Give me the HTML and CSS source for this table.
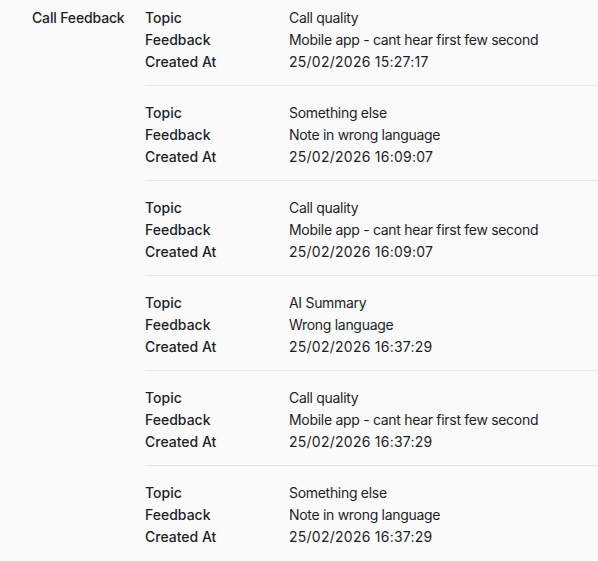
FILE: index.html
```html
<!DOCTYPE html>
<html lang="en">
<head>
  <meta charset="UTF-8">
  <meta name="viewport" content="width=device-width, initial-scale=1.0">
  <title>Call Feedback</title>
  <link rel="stylesheet" href="styles.css">
</head>
<body>
  <div class="field">
    <div class="field-label">Call Feedback</div>

    <div class="entries">
      <dl class="entry">
        <dt>Topic</dt><dd>Call quality</dd>
        <dt>Feedback</dt><dd>Mobile app - cant hear first few second</dd>
        <dt>Created At</dt><dd class="date">25/02/2026 15:27:17</dd>
      </dl>

      <dl class="entry">
        <dt>Topic</dt><dd>Something else</dd>
        <dt>Feedback</dt><dd>Note in wrong language</dd>
        <dt>Created At</dt><dd class="date">25/02/2026 16:09:07</dd>
      </dl>

      <dl class="entry">
        <dt>Topic</dt><dd>Call quality</dd>
        <dt>Feedback</dt><dd>Mobile app - cant hear first few second</dd>
        <dt>Created At</dt><dd class="date">25/02/2026 16:09:07</dd>
      </dl>

      <dl class="entry">
        <dt>Topic</dt><dd>AI Summary</dd>
        <dt>Feedback</dt><dd>Wrong language</dd>
        <dt>Created At</dt><dd class="date">25/02/2026 16:37:29</dd>
      </dl>

      <dl class="entry">
        <dt>Topic</dt><dd>Call quality</dd>
        <dt>Feedback</dt><dd>Mobile app - cant hear first few second</dd>
        <dt>Created At</dt><dd class="date">25/02/2026 16:37:29</dd>
      </dl>

      <dl class="entry">
        <dt>Topic</dt><dd>Something else</dd>
        <dt>Feedback</dt><dd>Note in wrong language</dd>
        <dt>Created At</dt><dd class="date">25/02/2026 16:37:29</dd>
      </dl>
    </div>
  </div>
</body>
</html>
```

FILE: styles.css
```css
/* Base */
body {
  margin: 0;
  background-color: #fafafa;
  color: #1e1e28;
  font-family: Inter, "Noto Sans", sans-serif;
  font-size: 14px;
  line-height: 22px;
}

/* Label column + list of entries */
.field {
  display: grid;
  grid-template-columns: 113px 1fr;
  padding: 7px 0 0 32px;
}

.field-label {
  font-weight: 500;
  letter-spacing: -0.15px;
}

.entry {
  display: grid;
  grid-template-columns: 144px 1fr;
  margin: 0;
  padding: 16px 0 12px;
  border-bottom: 1px solid #e6e6e8;

  &:first-child {
    padding-top: 0;
  }

  &:last-child {
    border-bottom: none;
  }

  & dt {
    font-weight: 500;
  }

  & dd {
    margin: 0;
    letter-spacing: -0.3px;
  }

  /* digits run wider in the original face */
  & dd.date {
    letter-spacing: 0.25px;
  }
}
```
